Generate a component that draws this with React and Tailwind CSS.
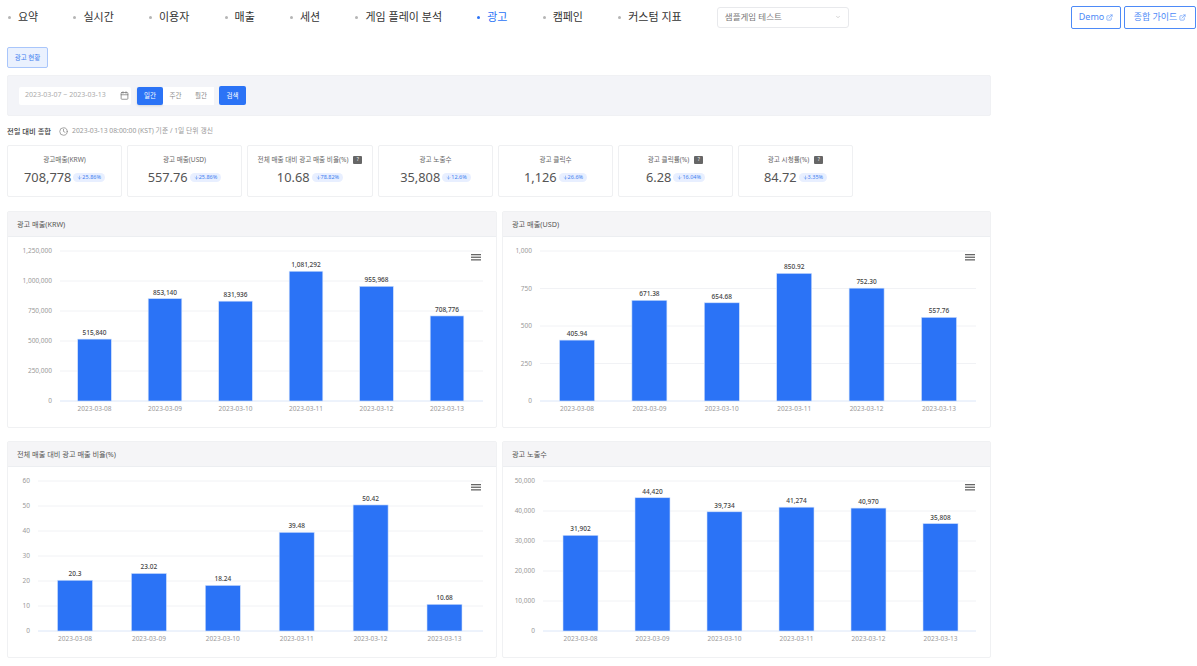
import { Calendar, ChevronDown, Clock, ExternalLink, ArrowDown } from "lucide-react";

const navItems = ["요약", "실시간", "이용자", "매출", "세션", "게임 플레이 분석", "광고", "캠페인", "커스텀 지표"];

const summary = [
    { label: "광고매출(KRW)", value: "708,778", delta: "25.86%", w: "w-[115px]" },
    { label: "광고 매출(USD)", value: "557.76", delta: "25.86%", w: "w-[115px]" },
    { label: "전체 매출 대비 광고 매출 비율(%)", value: "10.68", delta: "78.82%", w: "w-[126px]", help: true },
    { label: "광고 노출수", value: "35,808", delta: "12.6%", w: "w-[115px]" },
    { label: "광고 클릭수", value: "1,126", delta: "26.6%", w: "w-[115px]" },
    { label: "광고 클릭률(%)", value: "6.28", delta: "16.04%", w: "w-[115px]", help: true },
    { label: "광고 시청률(%)", value: "84.72", delta: "3.35%", w: "w-[115px]", help: true },
];

const dates = ["2023-03-08", "2023-03-09", "2023-03-10", "2023-03-11", "2023-03-12", "2023-03-13"];

const charts = [
    {
        title: "광고 매출(KRW)",
        max: 1250000,
        ticks: ["0", "250,000", "500,000", "750,000", "1,000,000", "1,250,000"],
        values: [515840, 853140, 831936, 1081292, 955968, 708776],
        labels: ["515,840", "853,140", "831,936", "1,081,292", "955,968", "708,776"],
        left: 52,
        right: 475,
        first: 86.5,
        step: 70.5,
        barW: 33.6,
        top: 14,
    },
    {
        title: "광고 매출(USD)",
        max: 1000,
        ticks: ["0", "250", "500", "750", "1,000"],
        values: [405.94, 671.38, 654.68, 850.92, 752.3, 557.76],
        labels: ["405.94", "671.38", "654.68", "850.92", "752.30", "557.76"],
        left: 37,
        right: 473,
        first: 74,
        step: 72.4,
        barW: 35,
        top: 14,
    },
    {
        title: "전체 매출 대비 광고 매출 비율(%)",
        max: 60,
        ticks: ["0", "10", "20", "30", "40", "50", "60"],
        values: [20.3, 23.02, 18.24, 39.48, 50.42, 10.68],
        labels: ["20.3", "23.02", "18.24", "39.48", "50.42", "10.68"],
        left: 30,
        right: 475,
        first: 67,
        step: 73.9,
        barW: 35,
        top: 14,
    },
    {
        title: "광고 노출수",
        max: 50000,
        ticks: ["0", "10,000", "20,000", "30,000", "40,000", "50,000"],
        values: [31902, 44420, 39734, 41274, 40970, 35808],
        labels: ["31,902", "44,420", "39,734", "41,274", "40,970", "35,808"],
        left: 40,
        right: 473,
        first: 77.5,
        step: 72,
        barW: 35,
        top: 14,
    },
];

function BarChart({ chart, width }) {
    const h = 150;
    const bottom = chart.top + h;
    return (
        <svg width={width} height="190" className="block font-['Noto_Sans','Noto_Sans_CJK_KR',sans-serif]">
            {chart.ticks.map((t, i) => {
                const y = bottom - (i * h) / (chart.ticks.length - 1);
                return (
                    <g key={t}>
                        <line x1={chart.left} x2={chart.right} y1={y} y2={y} stroke={i === 0 ? "#dbe6f8" : "#f1f2f5"} />
                        <text x={chart.left - 8} y={y + 2} textAnchor="end" fontSize="6.5" fill="#9a9a9a">{t}</text>
                    </g>
                );
            })}
            {chart.values.map((v, i) => {
                const barH = (v / chart.max) * h;
                const cx = chart.first + i * chart.step;
                return (
                    <g key={dates[i]}>
                        <rect x={cx - chart.barW / 2} y={bottom - barH} width={chart.barW} height={barH} fill="#2b73f6" stroke="#cfe0fc" strokeWidth="0.6" />
                        <text x={cx} y={bottom - barH - 4} textAnchor="middle" fontSize="6.5" fontWeight="500" fill="#444">{chart.labels[i]}</text>
                        <text x={cx} y={bottom + 10} textAnchor="middle" fontSize="6.5" fill="#999">{dates[i]}</text>
                    </g>
                );
            })}
            <g fill="#666">
                <rect x={width - 25} y="17" width="10" height="1.3" />
                <rect x={width - 25} y="19.6" width="10" height="1.3" />
                <rect x={width - 25} y="22.2" width="10" height="1.3" />
            </g>
        </svg>
    );
}

function Panel({ chart, width }) {
    return (
        <div className="rounded-[2px] border border-[#f0f1f3] bg-white" style={{ width }}>
            <div className="flex h-[25px] items-center border-b border-[#eceef1] bg-[#f5f5f7] pl-[9px] text-[7.2px] text-[#555]">
                {chart.title}
            </div>
            <BarChart chart={chart} width={width - 2} />
        </div>
    );
}

export default function App() {
    return (
        <div className="h-[666px] w-[1197px] overflow-hidden bg-white font-['Noto_Sans','Noto_Sans_CJK_KR',sans-serif]">
            <div className="flex h-[34px] items-center pl-2">
                {navItems.map((item) => (
                    <div key={item} className="mr-[35.2px] flex items-center gap-[7px]">
                        <span className={`h-[3px] w-[3px] rounded-full ${item === "광고" ? "bg-[#2b73f6]" : "bg-[#b5b5b5]"}`} />
                        <span className={`text-[11px] ${item === "광고" ? "text-[#2b73f6]" : "text-[#333]"}`}>{item}</span>
                    </div>
                ))}
                <div className="flex h-[21px] w-[132px] items-center justify-between rounded-[3px] border border-[#e8e9ec] px-[7px] text-[8.5px] text-[#777]">
                    샘플게임 테스트
                    <ChevronDown size={6} className="text-[#aaa]" />
                </div>
                <div className="ml-auto mr-px flex gap-[3px]">
                    <div className="flex h-[23px] w-[50px] items-center justify-center gap-[2px] rounded-[2px] border border-[#4d8af7] text-[9px] text-[#4d8af7]">
                        Demo
                        <ExternalLink size={7} />
                    </div>
                    <div className="flex h-[23px] w-[72px] items-center justify-center gap-[2px] rounded-[2px] border border-[#4d8af7] text-[9px] text-[#4d8af7]">
                        종합 가이드
                        <ExternalLink size={7} />
                    </div>
                </div>
            </div>

            <div className="w-[991px] pl-[7px] pt-[13px]">
                <div className="flex h-[21px] w-[41px] items-center justify-center rounded-[2px] border border-[#a9c6fb] bg-[#eaf1fe] text-[6.5px] text-[#3f7ff0]">
                    광고 현황
                </div>

                <div className="mt-[7px] flex h-[41px] items-center rounded-[2px] border border-[#f0f1f4] bg-[#f3f4f8] pl-[11px]">
                    <div className="flex h-[18px] w-[112px] items-center justify-between rounded-[2px] bg-white pl-[6px] pr-[2px] text-[7px] text-[#aaa]">
                        2023-03-07 ~ 2023-03-13
                        <Calendar size={9} className="text-[#777]" />
                    </div>
                    <div className="ml-[6px] flex h-[18px] text-[6.5px]">
                        <div className="flex w-[26px] items-center justify-center rounded-[2px] bg-[#2b73f6] text-white shadow-sm">일간</div>
                        <div className="flex w-[25px] items-center justify-center bg-white text-[#888]">주간</div>
                        <div className="flex w-[26px] items-center justify-center bg-white text-[#888]">월간</div>
                    </div>
                    <div className="ml-[5px] flex h-[19px] w-[27px] items-center justify-center rounded-[2px] bg-[#2b73f6] text-[6.5px] text-white">검색</div>
                </div>

                <div className="mt-[9px] flex h-[12px] items-center text-[6.8px]">
                    <span className="text-[7.3px] font-medium text-[#444]">전일 대비 종합</span>
                    <Clock size={9} className="ml-[8px] text-[#888]" />
                    <span className="ml-[4px] text-[#999]">2023-03-13 08:00:00 (KST) 기준 / 1일 단위 갱신</span>
                </div>

                <div className="mt-[8px] flex gap-[5px]">
                    {summary.map((s) => (
                        <div key={s.label} className={`flex h-[52px] flex-col items-center justify-center rounded-[2px] border border-[#eff0f2] ${s.w}`}>
                            <div className="flex h-[10px] items-center gap-[5px] text-[6.6px] text-[#666]">
                                {s.label}
                                {s.help && (
                                    <span className="flex h-[8px] w-[9px] items-center justify-center rounded-[1px] bg-[#666] text-[5px] text-white">?</span>
                                )}
                            </div>
                            <div className="mt-[2px] flex items-center gap-[2px]">
                                <span className="text-[12.8px] leading-[20px] text-[#555]">{s.value}</span>
                                <span className="flex h-[9px] items-center rounded-full bg-[#e8efff] px-[4px] text-[5.5px] text-[#3f7ff0]">
                                    <ArrowDown size={5} />
                                    {s.delta}
                                </span>
                            </div>
                        </div>
                    ))}
                </div>

                <div className="mt-[14px] grid grid-cols-[490px_489px] gap-x-[5px] gap-y-[13px]">
                    {charts.map((c, i) => (
                        <Panel key={c.title} chart={c} width={i % 2 === 0 ? 490 : 489} />
                    ))}
                </div>
            </div>
        </div>
    );
}
